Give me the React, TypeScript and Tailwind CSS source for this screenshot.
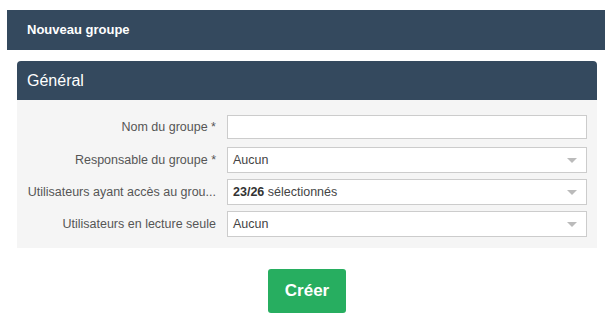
import { ReactNode } from 'react'

function Row({ label, children, className = '' }: { label: string; children: ReactNode; className?: string }) {
  return (
    <div className={`flex items-center ${className}`}>
      <div className="w-[210px] shrink-0 pl-[10px] pr-[11px] text-right text-[12.5px] text-[#555] whitespace-nowrap overflow-hidden">
        {label}
      </div>
      <div className="w-[360px]">{children}</div>
    </div>
  )
}

function Select({ children }: { children: ReactNode }) {
  return (
    <div className="h-[26px] bg-white border border-[#ccc] flex items-center px-[5px] text-[12.5px] text-[#444]">
      <span className="flex-1">{children}</span>
      <span className="w-0 h-0 border-l-[5px] border-r-[5px] border-t-[5px] border-l-transparent border-r-transparent border-t-[#bbb] mr-[4px]" />
    </div>
  )
}

export default function App() {
  return (
    <div className="w-[612px] h-[335px] bg-white pt-[10px] px-[7px]" style={{ fontFamily: '"Liberation Sans", Arial, sans-serif' }}>
      <div className="h-[40px] bg-[#34495e] flex items-center pl-[20px] text-[13px] font-bold text-white">
        Nouveau groupe
      </div>

      <div className="mx-[10px] mt-[11px] w-[580px]">
        <div className="h-[39px] bg-[#34495e] rounded-t-[4px] flex items-center pl-[10px] text-[16px] text-white">
          Général
        </div>
        <div className="bg-[#f5f5f5] pt-[15px] pb-[11px] flex flex-col">
          <Row label="Nom du groupe *">
            <div className="h-[24px] bg-white border border-[#ccc]" />
          </Row>
          <Row label="Responsable du groupe *" className="mt-[8px]">
            <Select>Aucun</Select>
          </Row>
          <Row label="Utilisateurs ayant accès au grou..." className="mt-[6px]">
            <Select>
              <span className="font-bold text-[#333]">23/26</span> sélectionnés
            </Select>
          </Row>
          <Row label="Utilisateurs en lecture seule" className="mt-[6px]">
            <Select>Aucun</Select>
          </Row>
        </div>
      </div>

      <div className="flex justify-center mt-[21px] pl-[2px]">
        <button className="w-[78px] h-[44px] bg-[#27ae60] rounded-[3px] text-white font-bold text-[17px]">
          Créer
        </button>
      </div>
    </div>
  )
}
